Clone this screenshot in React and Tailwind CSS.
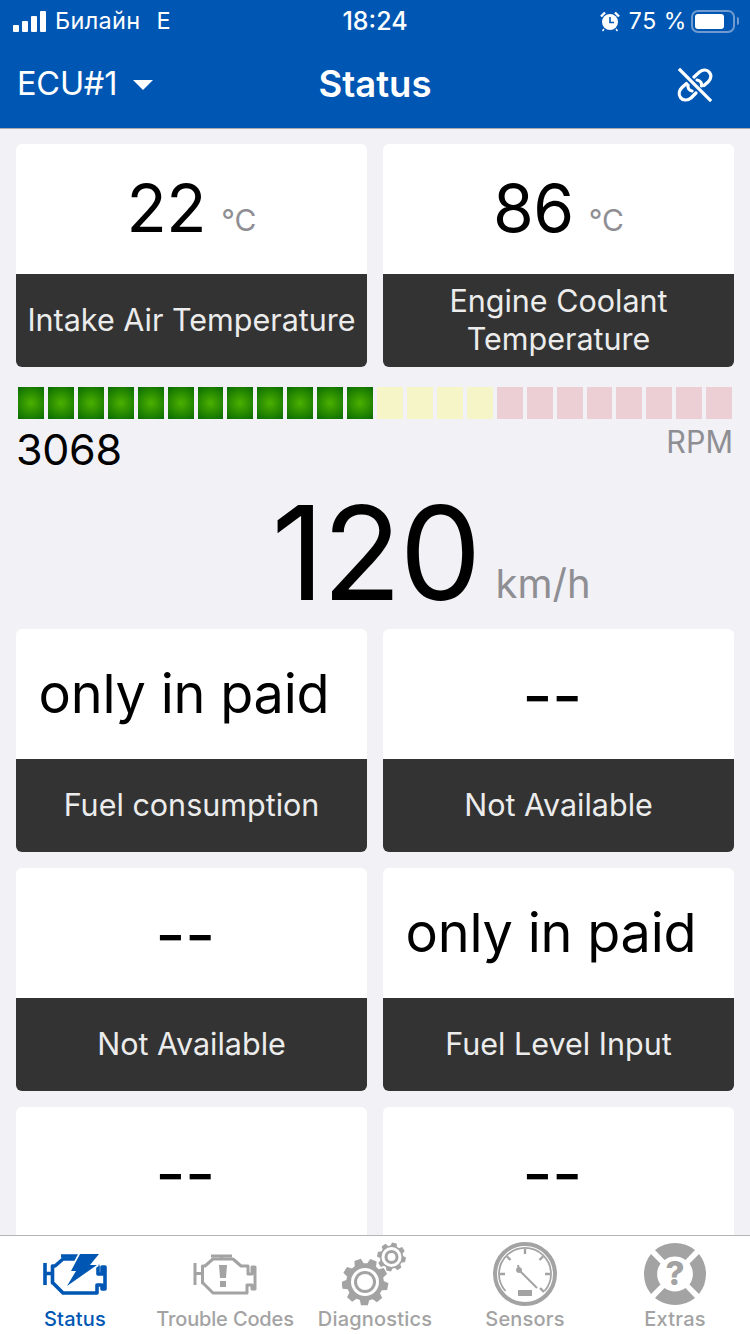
const F = { fontFamily: 'Inter, "Liberation Sans", sans-serif' };

function Card({ value, unit, label }) {
  const isDash = value === '--';
  const isText = !unit && !isDash;
  return (
    <div className="flex flex-col h-[223px] rounded-[6px] overflow-hidden">
      <div className={`h-[130px] bg-white flex items-center justify-center whitespace-nowrap ${unit ? 'gap-[15px] pb-[2px]' : isDash ? 'pr-[13px] pt-[2px]' : 'pr-[15px]'}`}>
        <span className={`leading-none text-black ${isText ? 'text-[54px] tracking-[-0.2px]' : 'text-[66px] tracking-[-0.5px]'}`}>{value}</span>
        {unit && <span className="text-[30px] leading-none text-[#8e8e93] mt-[24px]">{unit}</span>}
      </div>
      <div className="h-[93px] bg-[#333333] flex items-center justify-center text-center px-[8px] pb-[1px] text-[30.5px] leading-[38.5px] text-[#ececec]">
        {label}
      </div>
    </div>
  );
}

function Engine({ color, sw, children }) {
  return (
    <svg width="66" height="42" viewBox="0 0 66 42" fill="none" stroke={color} strokeWidth={sw} strokeLinejoin="round">
      <path d="M19 3H40 M29.5 3V6" />
      <path d="M3 10V32 M3 20.5H10" />
      <path d="M10.5 13H13L21 6H41L49 13H56V21H60V14H63V36H60V32H55V40H21L11 30H10.5Z" />
      {children}
    </svg>
  );
}

function Tab({ label, active, tracking, children }) {
  return (
    <div className="w-[150px] pt-[5px] flex flex-col items-center">
      <div className="h-[66px] flex items-center justify-center">{children}</div>
      <div className={`text-[20px] leading-[24px] font-medium whitespace-nowrap ${tracking} ${active ? 'text-[#0057b3]' : 'text-[#a3a3a3]'}`}>{label}</div>
    </div>
  );
}

const round2 = (n) => Math.round(n * 100) / 100;

function Gear({ cx, cy, r, teeth, ring }) {
  const pts = [];
  for (let i = 0; i < teeth; i++) {
    const a = (i / teeth) * Math.PI * 2 + 0.2;
    const w = Math.PI / teeth;
    const p = (ang, rad) => `${round2(cx + Math.cos(ang) * rad)} ${round2(cy + Math.sin(ang) * rad)}`;
    pts.push(p(a - w * 0.72, r * 0.8), p(a - w * 0.42, r), p(a + w * 0.42, r), p(a + w * 0.72, r * 0.8));
  }
  return (
    <g>
      <path d={`M${pts.join('L')}Z`} fill="#a3a3a3" />
      <circle cx={cx} cy={cy} r={ring + 3} fill="#fff" />
      <circle cx={cx} cy={cy} r={ring} fill="#a3a3a3" />
      <circle cx={cx} cy={cy} r={ring - 3} fill="#fff" />
    </g>
  );
}

export default function App() {
  const segs = Array.from({ length: 24 }, (_, i) => i);
  return (
    <div style={F} className="w-[750px] h-[1334px] bg-[#f1f1f6] flex flex-col overflow-hidden">
      <header className="h-[129px] shrink-0 bg-[#0057b3] border-b border-[#a9a9ad] text-white">
        <div className="h-[40px] flex items-center justify-between relative pl-[13px] pr-[12px] pt-[2px]">
          <div className="flex items-center">
            <div className="flex items-end gap-[3px] h-[21px]">
              <span className="w-[6px] h-[7px] bg-white rounded-[1px]"></span>
              <span className="w-[6px] h-[11px] bg-white rounded-[1px]"></span>
              <span className="w-[6px] h-[16px] bg-white rounded-[1px]"></span>
              <span className="w-[6px] h-[21px] bg-white rounded-[1px]"></span>
            </div>
            <span className="ml-[9px] text-[23.5px] leading-none font-normal tracking-[0.3px]">Билайн</span>
            <span className="ml-[16px] text-[23.5px] leading-none">E</span>
          </div>
          <div className="absolute left-0 right-0 text-center text-[25px] font-medium leading-none">18:24</div>
          <div className="flex items-center">
            <svg width="20" height="21" viewBox="0 0 20 21">
              <circle cx="10" cy="11" r="8" fill="#fff" />
              <path d="M10 6V11.5H14" stroke="#0057b3" strokeWidth="1.6" fill="none" />
              <path d="M1 5.5L5 1.5 M15 1.5L19 5.5" stroke="#fff" strokeWidth="2.4" />
              <path d="M4 18L2.5 20 M16 18L17.5 20" stroke="#fff" strokeWidth="1.4" />
            </svg>
            <span className="ml-[9px] text-[23px] leading-none tracking-[0.6px]">75 %</span>
            <div className="ml-[4px] w-[44px] h-[23px] rounded-[7px] border-2 border-[#6f9bd0] p-[2px] mr-[3px] relative">
              <div className="w-[29px] h-full bg-white rounded-[3px]"></div>
              <span className="absolute right-[-6px] top-[5px] w-[2px] h-[8px] bg-[#6f9bd0] rounded-r-[2px]"></span>
            </div>
          </div>
        </div>
        <div className="h-[88px] flex items-center justify-between relative pl-[17px] pr-[37px] pt-[1px]">
          <div className="flex items-center">
            <span className="text-[32.5px] leading-none tracking-[-0.2px]">ECU#1</span>
            <span className="ml-[16px] w-0 h-0 border-l-[10px] border-r-[10px] border-t-[10px] border-l-transparent border-r-transparent border-t-white"></span>
          </div>
          <div className="absolute left-0 right-0 text-center text-[36.5px] font-semibold leading-none">Status</div>
          <svg width="36" height="36" viewBox="0 0 36 36" fill="none" stroke="#fff" strokeWidth="3.2" strokeLinecap="round">
            <path d="M3 3L33 33" strokeLinecap="square" />
            <path d="M17 10L22.5 5C26 2 30.5 2.5 32.5 5.5C35 9 33.5 12.5 31 15L27 18.5" />
            <path d="M19 26L14 31C10.5 34 5.5 33.5 3.5 30.5C1 27 2.5 23 5 20.5L9.5 16.5" />
            <path d="M20 13C23.5 13.5 25 16 24.5 19" />
            <path d="M15 24C12 23.5 10.5 21 11 18" />
          </svg>
        </div>
      </header>

      <main className="flex-1 overflow-hidden pt-[15px] px-[16px]">
        <div className="grid grid-cols-2 gap-[16px]">
          <Card value="22" unit="°C" label="Intake Air Temperature" />
          <Card value="86" unit="°C" label="Engine Coolant Temperature" />
        </div>

        <div className="mt-[20px] px-[2px] flex gap-[4px]">
          {segs.map((i) => (
            <div
              key={i}
              className={`h-[32px] flex-1 ${i < 12 ? 'bg-[radial-gradient(circle,#4cb000_0%,#086a00_100%)]' : i < 16 ? 'bg-[#f5f5c8]' : 'bg-[#ebcfd4]'}`}
            ></div>
          ))}
        </div>
        <div className="mt-[6px] flex justify-between items-start">
          <span className="text-[43px] leading-[49px] text-black tracking-[-0.3px]">3068</span>
          <span className="text-[30.5px] leading-[34px] text-[#8e8e93] mr-[1px]">RPM</span>
        </div>

        <div className="h-[152px] mt-[3px] grid grid-cols-[1fr_auto_1fr] items-center gap-[16px] pl-[1px]">
          <span></span>
          <span className="text-[130px] leading-none text-black tracking-[-2px]">120</span>
          <span className="text-[40px] leading-none text-[#8e8e93] mt-[62px]">km/h</span>
        </div>

        <div className="grid grid-cols-2 gap-[16px]">
          <Card value="only in paid" label="Fuel consumption" />
          <Card value="--" label="Not Available" />
          <Card value="--" label="Not Available" />
          <Card value="only in paid" label="Fuel Level Input" />
          <Card value="--" label="" />
          <Card value="--" label="" />
        </div>
      </main>

      <nav className="h-[99px] shrink-0 bg-white border-t border-[#b5b5b8] flex">
        <Tab label="Status" active tracking="tracking-[0.2px]">
          <Engine color="#0057b3" sw={3.6}>
            <path d="M38 1H57L48 12H55L25 33L34 18H29Z" fill="#0057b3" stroke="#fff" strokeWidth="3.5" paintOrder="stroke" />
          </Engine>
        </Tab>
        <Tab label="Trouble Codes" tracking="tracking-[-0.15px]">
          <Engine color="#a3a3a3" sw={3}>
            <path d="M27 12H35L34 25H28Z" fill="#a3a3a3" stroke="none" />
            <rect x="28" y="28" width="6" height="6" fill="#a3a3a3" stroke="none" />
          </Engine>
        </Tab>
        <Tab label="Diagnostics" tracking="tracking-[0.2px]">
          <svg width="66" height="66" viewBox="0 0 66 66">
            <Gear cx={23} cy={41} r={23.5} teeth={9} ring={11} />
            <Gear cx={49.5} cy={16} r={14.5} teeth={8} ring={7} />
          </svg>
        </Tab>
        <Tab label="Sensors" tracking="tracking-[0.2px]">
          <svg width="66" height="66" viewBox="0 0 66 66" fill="none" stroke="#a3a3a3">
            <circle cx="33" cy="33" r="30" strokeWidth="4" />
            <path d="M13.5 50A26 26 0 1 1 52.5 50" strokeWidth="1.8" />
            <path d="M33 8V13 M15 15.5L18.5 19 M51 15.5L47.5 19 M8 33H13 M58 33H53 M52 51L48 47" strokeWidth="2.4" />
            <path d="M26 28L45 47" strokeWidth="2" />
            <circle cx="27" cy="29" r="2.5" fill="#a3a3a3" strokeWidth="1" />
            <path d="M27 29L26 24" strokeWidth="2" />
            <rect x="26" y="49" width="14" height="6" fill="#a3a3a3" stroke="none" />
          </svg>
        </Tab>
        <Tab label="Extras" tracking="tracking-[0.2px]">
          <svg width="66" height="66" viewBox="0 0 66 66">
            <path d="M13 9A32 32 0 0 1 53 9L43.5 19A18 18 0 0 0 22.5 19Z" fill="#a3a3a3" />
            <path d="M13 57A32 32 0 0 0 53 57L43.5 47A18 18 0 0 1 22.5 47Z" fill="#a3a3a3" />
            <path d="M9 13A32 32 0 0 0 9 53L18.5 43.5A18 18 0 0 1 18.5 22.5Z" fill="#a3a3a3" />
            <path d="M57 13A32 32 0 0 1 57 53L47.5 43.5A18 18 0 0 0 47.5 22.5Z" fill="#a3a3a3" />
            <text x="33" y="44" textAnchor="middle" fontSize="33" fontWeight="800" fill="#a3a3a3" fontFamily="Inter, sans-serif">?</text>
          </svg>
        </Tab>
      </nav>
    </div>
  );
}
